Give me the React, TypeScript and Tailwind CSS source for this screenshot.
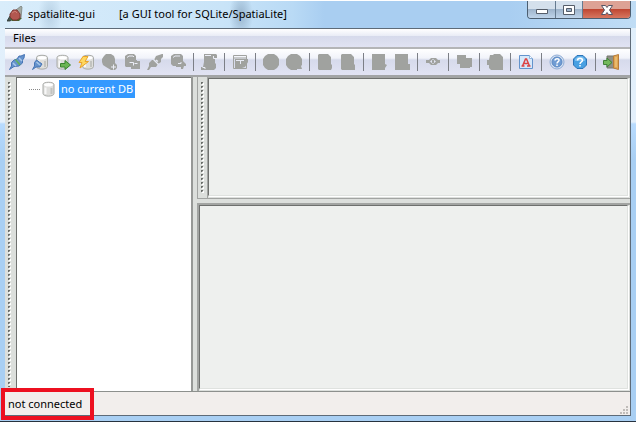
import React from "react";

const G = "#a0a29f";

type Icon = { name: string; off?: boolean; art: React.ReactNode };

const cylinder = (
  <>
    <path d="M3 3.500C3 .5 14 .5 14 3.500V12.500C14 16 3 16 3 12.500Z" fill="#dededc" stroke="#a9aba8" />
    <ellipse cx="8.500" cy="3.800" rx="4.500" ry="1.800" fill="#fff" />
    <path d="M11.500 7v6" stroke="#c2c3c0" strokeWidth="2" />
    <path d="M5.500 6.500v6.500" stroke="#f8f8f8" strokeWidth="2" />
  </>
);

const groups: Icon[][] = [
  [
    {
      name: "Connect",
      art: (
        <>
          <path d="M.5 15.500 2.500 12V8.500L5 6l3-1 2-3h2l3.500-1.500L15 4l-1.500 2v3L10 12l-5 .5Z" fill="#6592cc" stroke="#4775b5" />
          <path d="m4 9 3 3M10 4l3 3" stroke="#a9c8ea" strokeWidth="1.500" />
          <path d="m6.500 5.500 4.500 5.500" stroke="#62b05b" strokeWidth="1.500" />
        </>
      ),
    },
    {
      name: "Create database",
      art: (
        <>
          <g transform="translate(1.500 0)">{cylinder}</g>
          <path d="m.5 15.500 2-3.500V8.500L4.500 6 10 10l-2 3H4Z" fill="#6592cc" stroke="#4775b5" />
          <path d="m4.500 8 3.500 3" stroke="#a9c8ea" strokeWidth="1.500" />
        </>
      ),
    },
    {
      name: "Save memory database",
      art: (
        <>
          <g transform="translate(-1 0)">{cylinder}</g>
          <path d="M5.500 9.500H10V6.500L15.500 11 10 15.500V13H5.500Z" fill="#6bb553" stroke="#3b8430" />
        </>
      ),
    },
    {
      name: "Memory database",
      art: (
        <>
          <g transform="translate(1.500 0)">{cylinder}</g>
          <path d="M5 2.500 1 8.500h3L2 14l8.500-6.500H7L10 2.500Z" fill="#ffd860" stroke="#e9a52b" />
        </>
      ),
    },
    {
      name: "Virtual shapefile",
      off: true,
      art: (
        <>
          <path d="M5 0h5l3 2 1 3v4l2 2v3l-2 2h-4l-5-3-3-2-1-3V5l2-3Z" fill={G} />
          <path d="M12.500 10.500v5M10 13h5" stroke="#eceef7" />
        </>
      ),
    },
    {
      name: "Virtual text",
      off: true,
      art: (
        <>
          <path d="M1 2 4 0h6l2 2v4h1v1h3v8H7v-2H2l-1-1Z" fill={G} />
          <path d="M3 3.500 5 2h4l1 1M5.500 8.500h4v3M10.500 9.500h3" stroke="#eceef7" fill="none" />
        </>
      ),
    },
    {
      name: "Disconnect",
      off: true,
      art: (
        <>
          <path d="m0 16 2-4V9l3-3h2l2-4 3-1 3-1h1v3l-2 2v3l-3 2-2 3H4l-2 3Z" fill={G} />
          <path d="m6.500 5.500 5 5M9 6l2 1.500" stroke="#e7eaf4" strokeWidth="1.300" />
        </>
      ),
    },
    {
      name: "Vacuum",
      off: true,
      art: (
        <>
          <path d="M1 2 4 0h7l2 2v5l3 3v2h-2l-1 3h-2v-2H6v-1H3l-2-2Z" fill={G} />
          <path d="M3 3.500 5 2h5M8 9.500h3V8" stroke="#e7eaf4" fill="none" />
        </>
      ),
    },
  ],
  [
    {
      name: "SQL script",
      off: true,
      art: (
        <>
          <path d="M3 0h12l1 1v3h-2v5l1 1v4l-2 2H0v-3h2l1-5Z" fill={G} />
          <path d="M4 1.500h6M12.500 2v2.500h2M1.500 13.500H4v1.500" stroke="#eceef7" fill="none" />
        </>
      ),
    },
  ],
  [
    {
      name: "Query composer",
      off: true,
      art: (
        <>
          <path d="M1.500 1.500h13v13h-13ZM1 4h14" fill="none" stroke={G} />
          <path d="M3 5h13v3l-3 5-3 1H3Z" fill={G} />
          <path d="M4 6.500h8M8.500 7v3" stroke="#e7eaf4" fill="none" />
        </>
      ),
    },
  ],
  [
    { name: "Charset", off: true, art: <path d="M5 0h6l3 2 2 3v6l-2 3-3 2H5l-3-2-2-3V5l2-3Z" fill={G} /> },
    { name: "Load shapefile", off: true, art: <path d="M5 0h6l3 2 2 3v6l-1 1 1 3h-5v1H5l-3-2-2-3V5l2-3Z" fill={G} /> },
  ],
  [
    { name: "Load text", off: true, art: <path d="M2 0h9l3 3v7l1 1v3l-1 2H2l-1-1V1Z" fill={G} /> },
    { name: "Load spreadsheet", off: true, art: <path d="M2 0h9l3 3v7l1 1v5H2l-1-1V1Z" fill={G} /> },
  ],
  [
    { name: "Network", off: true, art: <path d="M1 0h13v10l2 1-2 3v2H1Z" fill={G} /> },
    { name: "Exif photos", off: true, art: <path d="M1 0h13v10h2v6H1Z" fill={G} /> },
  ],
  [
    {
      name: "Spatial view",
      off: true,
      art: (
        <>
          <path d="M1 6h3l2-2h5l2 2h2v3h-2l-2 2H6L4 9H1Z" fill={G} />
          <path d="M8 5 11 7.500 8 10 5 7.500Z" fill="#e1e4f2" />
          <path d="M7 6h2v3H7Z" fill={G} />
        </>
      ),
    },
  ],
  [{ name: "Search", off: true, art: <path d="M1 1h9v3h6v9h-2v1H4v-4H1Z" fill={G} /> }],
  [{ name: "Security", off: true, art: <path d="M3 1h3l1-1h6l3 3v13H4l-2-2v-3H0V6h2Z" fill={G} /> }],
  [
    {
      name: "Default charset",
      art: (
        <>
          <path d="M1.500 1.500h10l3 3v10h-13Z" fill="#d6e8fa" stroke="#6393cc" />
          <path d="M11.500 1.500v3h3" fill="#fff" stroke="#8fb4de" />
          <path d="m4.500 12 3-7h1l3 7M5.500 9.500h4.500M3.500 12h3M9 12h3.500" fill="none" stroke="#dc4344" strokeWidth="1.500" />
        </>
      ),
    },
  ],
  [
    {
      name: "Help",
      art: (
        <>
          <circle cx="8" cy="8" r="7" fill="#d5e1f1" stroke="#8fadd6" />
          <circle cx="8" cy="8" r="5" fill="#6f9cd3" stroke="#5c89c4" />
          <path d="M6 6.500C6 4 10.500 4 10 6.500 10 7.500 8 8 8 9.500M8 10.500V12" fill="none" stroke="#fff" strokeWidth="1.500" />
        </>
      ),
    },
    {
      name: "About",
      art: (
        <>
          <path d="M5 1.500h6L14.500 5v6L11 14.500H5L1.500 11V5Z" fill="#48a0e2" stroke="#2d75b8" />
          <path d="M3 7V5l3-2.500h4.500L13 5v2Z" fill="#79bdef" />
          <path d="M5.500 6.500C5.500 3.500 10.500 3.500 10.500 6.500 10.500 8 8 8 8 10M8 11v1.500" fill="none" stroke="#fff" strokeWidth="1.500" />
        </>
      ),
    },
  ],
  [
    {
      name: "Exit",
      art: (
        <>
          <path d="M4 2h8v12H4Z" fill="#8f9087" stroke="#777970" />
          <path d="m10.500 2 5-1.500v15L10.500 14Z" fill="#dfa653" stroke="#b97c3a" />
          <path d="M13 3v10" stroke="#f2cd88" />
          <path d="M.5 6.500H4V4l5 4.500L4 13v-2.500H.5Z" fill="#72b95c" stroke="#41803a" />
        </>
      ),
    },
  ],
];

function Grip({ id }: { id: string }) {
  return (
    <div className="flex w-[9px] shrink-0 justify-center pt-[5px] pb-1">
      <svg className="h-full w-[3px]" aria-hidden="true">
        <pattern id={id} width="3" height="4" patternUnits="userSpaceOnUse">
          <path d="M1 1h2v2H1Z" fill="#fff" />
          <path d="M0 0h2v1H1v1H0Z" fill="#6b6e6b" />
          <path d="M1 1h1v1H1Z" fill="#b5b8b5" />
        </pattern>
        <rect width="3" height="100%" fill={`url(#${id})`} />
      </svg>
    </div>
  );
}

const sunken =
  "mr-0.5 mb-0.5 flex-1 border border-t-[#6e706e] border-r-[#dfe2df] border-b-[#dfe2df] border-l-[#6e706e] bg-[#eef0ee] shadow-[1px_1px_0_#fff]";
const caption =
  "flex items-center justify-center bg-linear-to-b from-[#d4e0ec] from-45% via-[#9fb5cc] via-50% to-[#bfd4ea] border-r border-[#657b90]";

export default function App() {
  return (
    <div className="flex h-screen flex-col overflow-hidden border-b border-[#27333f] bg-[linear-gradient(to_bottom,#e0effb_0,#e4f0fb_122px,#b8dbfe_124px,#a9cff3_160px,#a9cff3_100%)] font-['Noto_Sans','Open_Sans',sans-serif] text-[11px] leading-4 text-black">
      <header className="flex h-7 shrink-0 items-start border-t border-white bg-[radial-gradient(ellipse_12px_24px_at_50px_14px,#9db9d080,transparent),radial-gradient(ellipse_12px_24px_at_241px_14px,#7f9bb5a0,transparent),linear-gradient(to_right,#d9edfb_0,#c9e4f8_35%,#b9daf5_46%,#a9cef1_51%,#a9cef1_80%,#c0ddf5_100%)] pr-[5px] pl-[7px]">
        <svg viewBox="0 0 16 16" className="mt-[5px] size-4 shrink-0" aria-hidden="true">
          <path d="M9 4 14 0l1 1-1 11H9Z" fill="#a4aaa3" stroke="#7b837e" strokeWidth=".8" />
          <path d="m0 15 3-5 3 3-3 2Z" fill="#4b5a53" stroke="#26302c" strokeWidth=".8" />
          <path d="M3 12h12l-3 3H5Z" fill="#476330" />
          <path d="M3 8 6 4h4l3 4v4l-3 2H6l-3-3Z" fill="#b25750" stroke="#7d3934" />
          <path d="m5 7 3-2 2 2" fill="none" stroke="#cf8076" />
        </svg>
        <h1 className="mt-[5px] ml-[5px] whitespace-pre">
          spatialite-gui<span className="ml-6">[a GUI tool for SQLite/SpatiaLite]</span>
        </h1>
        <div className="ml-auto flex h-[18px] shrink-0 overflow-hidden rounded-b border border-t-0 border-[#4c5e70]">
          <button aria-label="Minimize" className={caption + " w-7"}>
            <svg viewBox="0 0 12 5" className="mt-1 h-[5px] w-3"><path d="M.5.5h11v4H.5Z" fill="#fff" stroke="#555d69" /></svg>
          </button>
          <button aria-label="Maximize" className={caption + " w-[27px]"}>
            <svg viewBox="0 0 12 10" className="h-2.5 w-3"><path d="M.5.5h11v9H.5Z" fill="#fff" stroke="#555d69" /><path d="M3.500 3.500h5v3h-5Z" fill="#9fb5cc" stroke="#555d69" /></svg>
          </button>
          <button aria-label="Close" className="flex w-[47px] items-center justify-center bg-linear-to-b from-[#dda295] from-45% via-[#bf4733] via-50% to-[#d77660]">
            <svg viewBox="0 0 12 10" className="h-2.5 w-3"><path d="M.5.5h4L6 2.500 7.500.5h4L8.500 5l3 4.500h-4L6 7.500 4.500 9.500h-4l3-4.500Z" fill="#fff" stroke="#575565" /></svg>
          </button>
        </div>
      </header>

      <main className="mr-[5px] mb-[5px] ml-[5px] flex min-h-0 flex-1 flex-col border-t border-r border-b border-[#5e6b78] bg-[#dcdfdc]">
        <nav className="flex h-5 shrink-0 items-center border-b-2 border-b-[#b4b5b7] bg-[linear-gradient(to_bottom,#ffffff_0,#e8ebf5_40%,#d6daeb_41%,#e1e3f3_100%)] px-2">
          <button>Files</button>
        </nav>
        <div role="toolbar" aria-label="Main toolbar" className="flex h-7 shrink-0 items-center border-b-2 border-[#a2a4a5] bg-[linear-gradient(to_bottom,#ffffff_0,#f1f3fa_35%,#d6daeb_42%,#e1e3f3_100%)]">
          {groups.map((group, i) => (
            <React.Fragment key={i}>
              {i > 0 && <div className="flex w-2 shrink-0 justify-center"><div className="h-[18px] w-px bg-[#7c7f86]" /></div>}
              {group.map((icon) => (
                <button key={icon.name} aria-label={icon.name} disabled={icon.off} className="flex w-[23px] shrink-0 justify-center">
                  <svg viewBox="0 0 16 16" className="size-4">{icon.art}</svg>
                </button>
              ))}
            </React.Fragment>
          ))}
        </div>

        <div className="flex min-h-0 flex-1">
          <aside className="flex w-[188px] shrink-0 border-r-2 border-[#969896]">
            <Grip id="grip-tree" />
            <div className="ml-0.5 min-w-0 flex-1 border-t border-l border-[#6e706e] bg-white">
              <div role="tree" aria-label="Database" className="pt-0.5 pl-3">
                <div role="treeitem" aria-selected="true" className="flex items-center">
                  <span className="w-[11px] border-t border-dotted border-[#888]" />
                  <svg viewBox="0 0 16 16" className="size-4 shrink-0" aria-hidden="true">{cylinder}</svg>
                  <span className="ml-[3px] bg-[#3399ff] px-0.5 leading-[18px] whitespace-nowrap text-white">no current DB</span>
                </div>
              </div>
            </div>
          </aside>
          <div className="ml-1 flex min-w-0 flex-1 flex-col">
            <section aria-label="SQL query" className="flex h-[122px] shrink-0 border-b border-l border-[#a2a4a2]">
              <Grip id="grip-query" />
              <div className="flex flex-1 border-t border-l border-[#a2a4a2]">
                <div className={sunken} />
              </div>
            </section>
            <section aria-label="Query results" className="mt-1 flex min-h-0 flex-1 border-t-2 border-l-2 border-[#a2a4a2]">
              <div className={sunken} />
            </section>
          </div>
        </div>

        <footer className="relative flex h-6 shrink-0 items-center justify-between border-t border-[#8d908d] bg-[#f2eeec] pr-0.5 pl-[3px]">
          <span role="status">not connected</span>
          <svg viewBox="0 0 9 9" className="size-[9px] self-end" aria-hidden="true">
            <path d="M7 0h2v2H7ZM4 3h2v2H4ZM7 3h2v2H7ZM1 6h2v2H1ZM4 6h2v2H4ZM7 6h2v2H7Z" fill="#c0bcb9" />
          </svg>
          <div className="absolute -top-[4px] -left-[4px] h-8 w-[93px] border-4 border-[#ed1020]" />
        </footer>
      </main>
    </div>
  );
}
